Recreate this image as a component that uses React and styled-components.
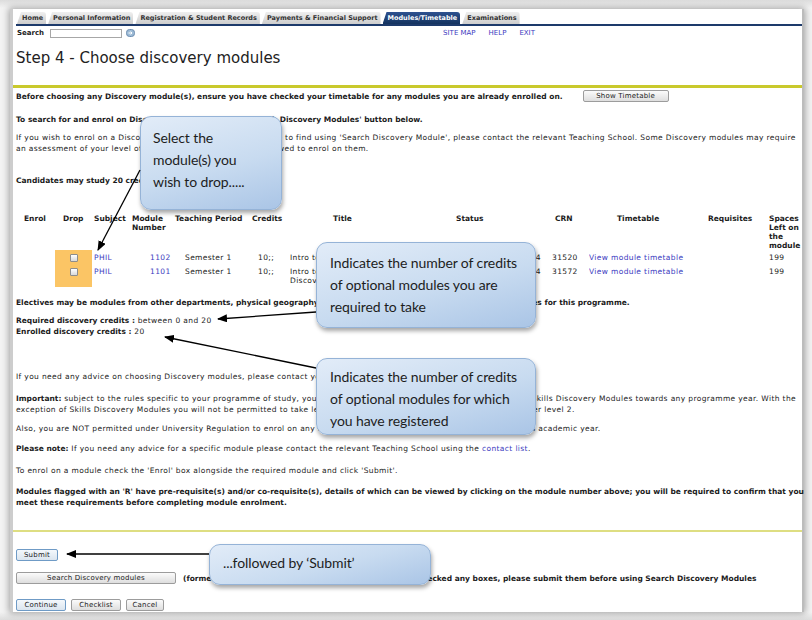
import React from 'react';
import styled, { createGlobalStyle } from 'styled-components';

const Global = createGlobalStyle`
  html, body { margin: 0; padding: 0; }
  body {
    width: 812px; height: 620px; overflow: hidden;
    background: #f1f1f1;
    font-family: "DejaVu Sans", Verdana, sans-serif;
  }
`;

const Stage = styled.div`
  position: relative;
  width: 812px;
  height: 620px;
  box-sizing: border-box;
  padding: 9px 8px 8px 10px;
  background: linear-gradient(180deg, #dcdcdc 0, #f3f3f3 8px, #f3f3f3 612px, #dcdcdc 620px);
`;

const Frame = styled.div`
  height: 100%;
  box-sizing: border-box;
  background: #fff;
  border-left: 3px solid #cdcdcd;
  border-right: 2px solid #bcbcbc;
  box-shadow: 0 0 7px 1px rgba(0, 0, 0, 0.35);
  padding: 3px 0 0 3px;
  display: flex;
  flex-direction: column;
  font-size: 7.5px;
  letter-spacing: 0.37px;
  color: #1b1b1b;
`;

const TabBar = styled.div`
  display: flex;
  gap: 2px;
  padding-left: 1px;
  border-bottom: 2px solid #1d3a6b;
  letter-spacing: 0;
`;

const Tab = styled.div`
  height: 12px;
  line-height: 12px;
  padding: 0 3px 0 5px;
  font-weight: bold;
  font-size: 6.5px;
  white-space: nowrap;
  color: ${p => (p.$active ? '#fff' : '#333')};
  background: ${p => (p.$active ? 'linear-gradient(#2e5290, #14335f)' : 'linear-gradient(#efefef, #cdcdcd)')};
  clip-path: polygon(4px 0, 100% 0, 100% 100%, 0 100%);
  border-top-right-radius: 3px;
`;

const SearchRow = styled.div`
  display: flex;
  align-items: center;
  height: 10px;
  margin-top: 2px;
  padding-left: 1px;
  font-size: 7px;
  letter-spacing: 0;
`;

const Label = styled.span`
  font-weight: bold;
  margin-right: 6px;
`;

const SearchInput = styled.span`
  display: inline-block;
  width: 70px;
  height: 7px;
  border: 1px solid #a7a7a7;
  background: #fff;
`;

const GoIcon = styled.svg`
  margin-left: 4px;
  display: block;
`;

const TopLinks = styled.nav`
  display: flex;
  gap: 13px;
  margin-left: 308px;
`;

const Link = styled.span`
  color: #3b3bc0;
`;

const Title = styled.h1`
  margin: 11px 0 0;
  font-weight: normal;
  font-size: 15px;
  line-height: 18px;
  letter-spacing: 0;
  color: #222;
`;

const Rule = styled.div`
  margin-top: ${p => p.$mt}px;
  height: ${p => p.$h}px;
  background: ${p => p.$c};
  margin-left: -3px;
`;

const Para = styled.div`
  margin-top: ${p => p.$mt || 0}px;
  line-height: 11px;
  white-space: nowrap;
  font-weight: ${p => (p.$bold ? 'bold' : 'normal')};
  letter-spacing: ${p => (p.$bold ? '0' : '0.37px')};
`;

const InlineRow = styled.div`
  display: flex;
  align-items: center;
  gap: 20px;
  margin-top: ${p => p.$mt || 0}px;
  white-space: nowrap;
  font-weight: bold;
  letter-spacing: 0;
`;

const Btn = styled.button`
  font-family: "DejaVu Sans", Verdana, sans-serif;
  font-size: 7px;
  letter-spacing: 0.2px;
  color: #222;
  height: 12px;
  width: ${p => p.$w}px;
  padding: 0;
  border: 1px solid ${p => (p.$primary ? '#6f9bc6' : '#9c9c9c')};
  border-radius: 2px;
  background: ${p => (p.$primary ? 'linear-gradient(#f4f8fc, #dbe5ef)' : 'linear-gradient(#fbfbfb, #dedede)')};
  line-height: 10px;
  font-weight: normal;
`;

const HeadGrid = styled.div`
  display: grid;
  grid-template-columns: 39px 31px 38px 43px 77px 81px 123px 99px 62px 91px 61px 1fr;
  padding-left: 8px;
  margin-top: 28px;
  font-weight: bold;
  line-height: 9px;
  letter-spacing: 0;
`;

const DataRow = styled.div`
  display: grid;
  grid-template-columns: 39px 37px 56px 37px 73px 32px 150px 104px 45px 111px 69px 1fr;
  line-height: 9px;
  white-space: nowrap;
`;

const Cell = styled.div`
  padding: 3px ${p => p.$pr || 0}px 2px ${p => p.$pl || 0}px;
  text-align: ${p => p.$align || 'left'};
  color: ${p => (p.$link ? '#3b3bc0' : 'inherit')};
  background: ${p => (p.$orange ? '#fbc565' : 'transparent')};
  display: ${p => (p.$orange ? 'flex' : 'block')};
  justify-content: center;
  align-items: flex-start;
  overflow: hidden;
`;

const Check = styled.span`
  display: block;
  width: 6px;
  height: 6px;
  margin-top: 1px;
  border: 1px solid #8d8d8d;
  border-radius: 1px;
  background: linear-gradient(#ffffff, #d9d9d9);
`;

const ButtonRow = styled.div`
  display: flex;
  align-items: center;
  gap: ${p => p.$gap || 5}px;
  margin-top: ${p => p.$mt}px;
  white-space: nowrap;
  letter-spacing: 0;
`;

const Bold = styled.b`
  font-weight: bold;
  letter-spacing: 0;
`;

const Callout = styled.div`
  position: absolute;
  left: ${p => p.$x}px;
  top: ${p => p.$y}px;
  width: ${p => p.$w}px;
  height: ${p => p.$h}px;
  box-sizing: border-box;
  padding: ${p => p.$pt}px 8px 0 ${p => p.$pl}px;
  border-radius: 11px;
  border: 1px solid #95b3d7;
  background: linear-gradient(165deg, #e2ecf8 0%, #c8dbf0 55%, #aac5e6 100%);
  box-shadow: 1px 3px 4px rgba(0, 0, 0, 0.35);
  font-family: Lato, "Open Sans", sans-serif;
  font-size: 14px;
  line-height: 22px;
  color: #1d1d1d;
  letter-spacing: -0.1px;
`;

const Arrows = styled.svg`
  position: absolute;
  left: 0;
  top: 0;
  pointer-events: none;
`;

export default function App() {
  return (
    <>
      <Global />
      <Stage>
        <Frame>
          <TabBar>
            <Tab>Home</Tab>
            <Tab>Personal Information</Tab>
            <Tab>Registration &amp; Student Records</Tab>
            <Tab>Payments &amp; Financial Support</Tab>
            <Tab $active>Modules/Timetable</Tab>
            <Tab>Examinations</Tab>
          </TabBar>
          <SearchRow>
            <Label>Search</Label>
            <SearchInput />
            <GoIcon width="9" height="8" viewBox="0 0 9 8">
              <rect x="0.5" y="0.5" width="8" height="7" rx="3" fill="#9dbbd6" stroke="#6d8db0" />
              <path d="M2.5 4h3.5M4.6 2.6 6 4 4.6 5.4" stroke="#fff" strokeWidth="1" fill="none" />
            </GoIcon>
            <TopLinks>
              <Link>SITE MAP</Link>
              <Link>HELP</Link>
              <Link>EXIT</Link>
            </TopLinks>
          </SearchRow>
          <Title>Step 4 - Choose discovery modules</Title>
          <Rule $mt={18} $h={3} $c="#c9c92c" />

          <InlineRow $mt={2}>
            <span>Before choosing any Discovery module(s), ensure you have checked your timetable for any modules you are already enrolled on.</span>
            <Btn $w={86}>Show Timetable</Btn>
          </InlineRow>
          <Para $bold $mt={12}>To search for and enrol on Discovery modules use the 'Search Discovery Modules' button below.</Para>
          <Para $mt={7}>
            If you wish to enrol on a Discovery module which you are unable to find using 'Search Discovery Module', please contact the relevant Teaching School. Some Discovery modules may require
            <br />
            an assessment of your level of competence, before you are allowed to enrol on them.
          </Para>
          <Para $bold $mt={21}>Candidates may study 20 credits of Discovery modules.</Para>

          <HeadGrid>
            <div>Enrol</div>
            <div>Drop</div>
            <div>Subject</div>
            <div>Module<br />Number</div>
            <div>Teaching Period</div>
            <div>Credits</div>
            <div>Title</div>
            <div>Status</div>
            <div>CRN</div>
            <div>Timetable</div>
            <div>Requisites</div>
            <div>Spaces<br />Left on<br />the<br />module</div>
          </HeadGrid>
          <DataRow>
            <Cell />
            <Cell $orange><Check /></Cell>
            <Cell $pl={2} $link>PHIL</Cell>
            <Cell $pl={2} $link>1102</Cell>
            <Cell>Semester 1</Cell>
            <Cell>10;;</Cell>
            <Cell>Intro to Philosophy: Mind</Cell>
            <Cell $align="right" $pr={3}>Enrolled 2014</Cell>
            <Cell $pl={8}>31520</Cell>
            <Cell $link>View module timetable</Cell>
            <Cell />
            <Cell>199</Cell>
          </DataRow>
          <DataRow>
            <Cell />
            <Cell $orange><Check /></Cell>
            <Cell $pl={2} $link>PHIL</Cell>
            <Cell $pl={2} $link>1101</Cell>
            <Cell>Semester 1</Cell>
            <Cell>10;;</Cell>
            <Cell>Intro to Ethics:<br />Discovering Values</Cell>
            <Cell $align="right" $pr={3}>Enrolled 2014</Cell>
            <Cell $pl={8}>31572</Cell>
            <Cell $link>View module timetable</Cell>
            <Cell />
            <Cell>199</Cell>
          </DataRow>

          <Para $bold $mt={10}>Electives may be modules from other departments, physical geography modules or Discovery modules. Please see the rules for this programme.</Para>
          <Para $mt={7}>
            <Bold>Required discovery credits :</Bold> between 0 and 20
            <br />
            <Bold>Enrolled discovery credits :</Bold> 20
          </Para>
          <Para $mt={34}>If you need any advice on choosing Discovery modules, please contact your Teaching School.</Para>
          <Para $mt={11}>
            <Bold>Important:</Bold> subject to the rules specific to your programme of study, you are permitted to count a maximum of 20 credits of Skills Discovery Modules towards any programme year. With the
            <br />
            exception of Skills Discovery Modules you will not be permitted to take level 1 Discovery Modules if you are studying at or over level 2.
          </Para>
          <Para $mt={8}>Also, you are NOT permitted under University Regulation to enrol on any module which you have already passed in a previous academic year.</Para>
          <Para $mt={9}>
            <Bold>Please note:</Bold> If you need any advice for a specific module please contact the relevant Teaching School using the <Link>contact list</Link>.
          </Para>
          <Para $mt={11}>To enrol on a module check the 'Enrol' box alongside the required module and click 'Submit'.</Para>
          <Para $bold $mt={10}>
            Modules flagged with an 'R' have pre-requisite(s) and/or co-requisite(s), details of which can be viewed by clicking on the module number above; you will be required to confirm that you
            <br />
            meet these requirements before completing module enrolment.
          </Para>
          <Rule $mt={22} $h={2} $c="#dede82" />

          <ButtonRow $mt={17}>
            <Btn $w={42} $primary>Submit</Btn>
          </ButtonRow>
          <ButtonRow $mt={11} $gap={7}>
            <Btn $w={160}>Search Discovery modules</Btn>
            <Bold>(formerly called: Search Elective Modules). If you have checked any boxes, please submit them before using Search Discovery Modules</Bold>
          </ButtonRow>
          <ButtonRow $mt={15}>
            <Btn $w={50} $primary>Continue</Btn>
            <Btn $w={50}>Checklist</Btn>
            <Btn $w={38}>Cancel</Btn>
          </ButtonRow>
        </Frame>

        <Callout $x={140} $y={116} $w={142} $h={94} $pt={10} $pl={12}>
          Select the<br />module(s) you<br />wish to drop.....
        </Callout>
        <Callout $x={316} $y={242} $w={220} $h={86} $pt={9} $pl={13}>
          Indicates the number of credits of optional modules you are required to take
        </Callout>
        <Callout $x={316} $y={358} $w={220} $h={77} $pt={7} $pl={13}>
          Indicates the number of credits of optional modules for which you have registered
        </Callout>
        <Callout $x={209} $y={544} $w={222} $h={41} $pt={7} $pl={13}>
          ...followed by ‘Submit’
        </Callout>

        <Arrows width="812" height="620" viewBox="0 0 812 620">
          <defs>
            <marker id="ah" markerWidth="10" markerHeight="8" refX="9" refY="4" orient="auto" markerUnits="userSpaceOnUse">
              <path d="M0 0 L10 4 L0 8 z" fill="#000" />
            </marker>
          </defs>
          <g stroke="#000" strokeWidth="1.3" fill="none" markerEnd="url(#ah)">
            <line x1="140" y1="170" x2="98" y2="250" />
            <line x1="316" y1="312" x2="218" y2="319" />
            <line x1="316" y1="368" x2="165" y2="337" />
            <line x1="209" y1="554" x2="67" y2="554" />
          </g>
        </Arrows>
      </Stage>
    </>
  );
}
